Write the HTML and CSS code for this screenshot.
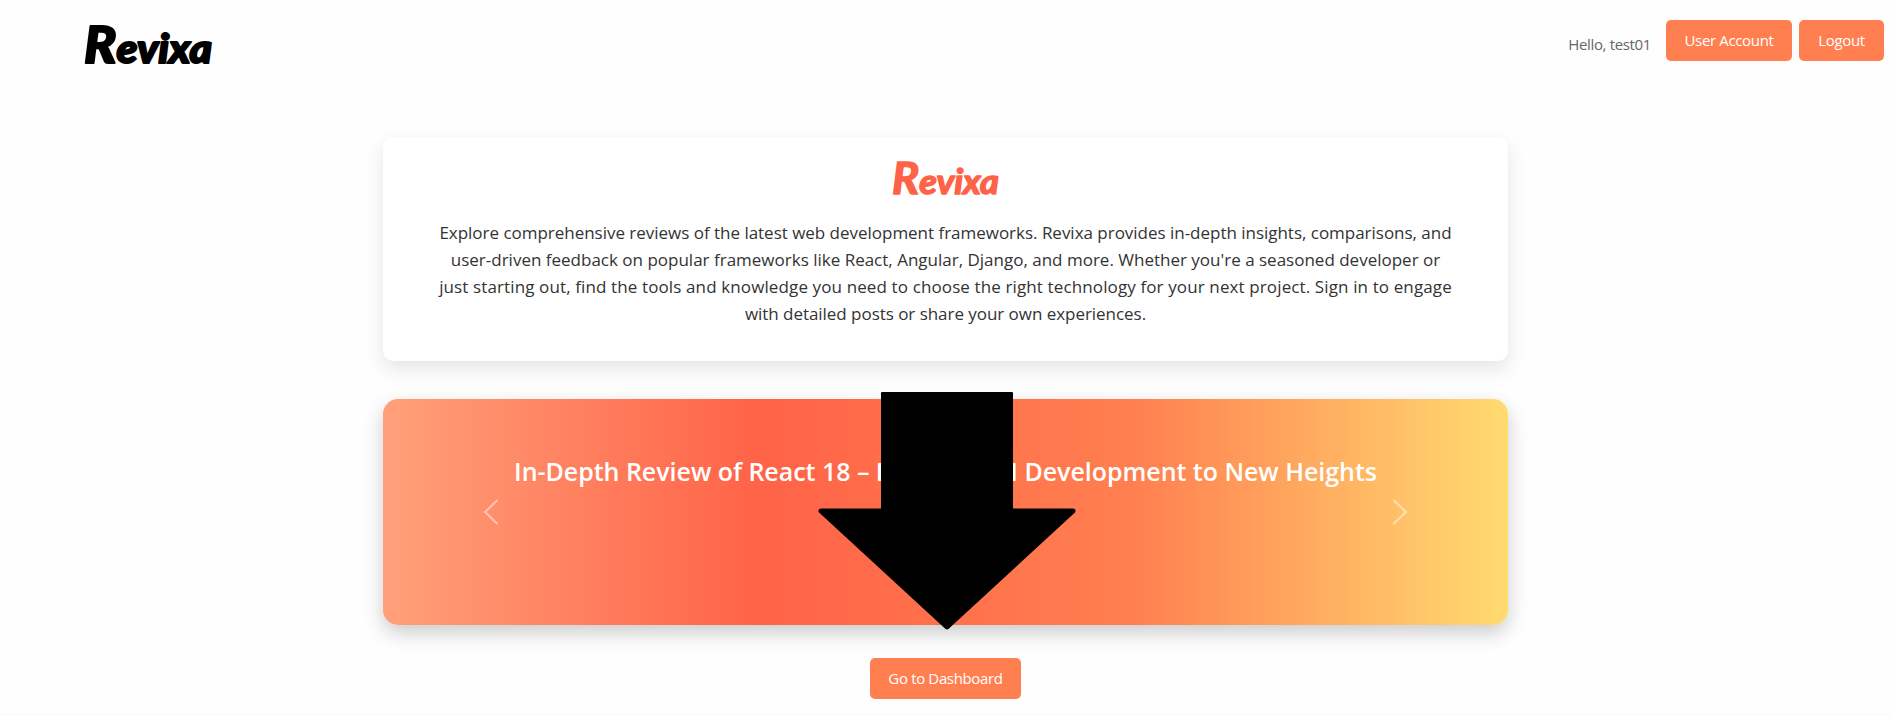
FILE: index.html
```html
<!DOCTYPE html>
<html lang="en">
<head>
<meta charset="utf-8">
<title>Revixa</title>
<link rel="stylesheet" href="styles.css">
</head>
<body>
<header class="navbar">
  <a class="brand"><svg class="brand-mark" viewBox="0 0 140 64" role="img"><text class="script-text" x="4" y="43" textLength="128" lengthAdjust="spacingAndGlyphs">R<tspan class="script-tail">evixa</tspan></text></svg></a>
  <nav class="actions">
    <span class="greeting">Hello, test01</span>
    <a class="btn btn-account">User Account</a>
    <a class="btn btn-logout">Logout</a>
  </nav>
</header>
<main class="content">
  <section class="intro">
    <svg class="intro-mark" viewBox="0 0 116 56" role="img"><text class="script-text script-small" x="4" y="37" textLength="107" lengthAdjust="spacingAndGlyphs">R<tspan class="script-tail">evixa</tspan></text></svg>
    <p class="intro-text">
      <span class="line l1">Explore comprehensive reviews of the latest web development frameworks. Revixa provides in-depth insights, comparisons, and</span>
      <span class="line l2">user-driven feedback on popular frameworks like React, Angular, Django, and more. Whether you're a seasoned developer or</span>
      <span class="line l3">just starting out, find the tools and knowledge you need to choose the right technology for your next project. Sign in to engage</span>
      <span class="line l4">with detailed posts or share your own experiences.</span>
    </p>
  </section>
  <section class="carousel">
    <svg class="chevron" viewBox="0 0 16 26"><path d="M14 1.5 2 13l12 11.500"/></svg>
    <h2 class="slide-title">In-Depth Review of React 18 – Elevating UI Development to New Heights</h2>
    <svg class="chevron" viewBox="0 0 16 26"><path d="M2 1.500 14 13 2 24.500"/></svg>
    <svg class="arrow" viewBox="0 0 260 240"><path d="M65 1H195V118H256L130 236 4 118H65Z"/><path class="arrow-head" d="M4 119H256L130 235Z"/></svg>
  </section>
  <a class="btn btn-dashboard">Go to Dashboard</a>
</main>
</body>
</html>
```

FILE: styles.css
```css
* { box-sizing: border-box; }
body {
  margin: 0;
  height: 716px;
  overflow: hidden;
  border-bottom: 3px solid #fcfcfc;
  background: #fefefe;
  font-family: "Open Sans", "Noto Sans", sans-serif;
  color: #333;
}
.navbar {
  display: flex;
  justify-content: space-between;
  align-items: flex-start;
  height: 137px;
  padding: 20px 8px 0 80px;
}
.brand-mark { display: block; width: 140px; height: 64px; }
.script-text {
  font: italic 900 51px Lato, sans-serif;
  fill: #000;
  stroke: #000;
  stroke-width: 2px;
  stroke-linejoin: round;
}
.script-tail { font-size: 0.8em; }
.script-small {
  font-size: 43px;
  font-weight: 700;
  fill: #ff6347;
  stroke: #ff6347;
  stroke-width: 1.5px;
}
.actions { display: flex; align-items: flex-start; }
.greeting {
  margin: 13px 15px 0 0;
  font-size: 15px;
  line-height: 22px;
  letter-spacing: -0.35px;
  color: #666;
  white-space: nowrap;
}
.btn {
  display: flex;
  align-items: center;
  justify-content: center;
  height: 41px;
  padding-bottom: 2px;
  border-radius: 5px;
  background: #ff7f50;
  color: #fff;
  font-size: 15px;
  letter-spacing: -0.35px;
  white-space: nowrap;
}
.btn-account { width: 126px; margin-right: 7px; }
.btn-logout { width: 85px; }
.btn-dashboard { width: 151px; margin-top: 33px; }
.content {
  display: flex;
  flex-direction: column;
  align-items: center;
  width: 1125px;
  margin-left: 383px;
}
.intro {
  display: flex;
  flex-direction: column;
  align-items: center;
  width: 100%;
  height: 224px;
  padding-top: 20px;
  border-radius: 10px;
  background: #fff;
  box-shadow: 0 8px 20px rgba(0, 0, 0, 0.1);
}
.intro-mark { width: 116px; height: 56px; }
.intro-text {
  display: flex;
  flex-direction: column;
  align-items: center;
  margin: 6px 0 0;
  font-size: 17px;
  line-height: 27px;
}
.line { white-space: nowrap; }
.l1 { letter-spacing: -0.02px; }
.l3 { letter-spacing: 0.12px; }
.l4 { letter-spacing: -0.04px; }
.carousel {
  position: relative;
  display: flex;
  align-items: center;
  justify-content: space-between;
  width: 100%;
  height: 226px;
  margin-top: 38px;
  padding: 0 100px;
  border-radius: 15px;
  background: linear-gradient(90deg, #ffa07a, #ff6347 33.3%, #ff7f50 66.6%, #ffdb70);
  box-shadow: 0 8px 20px rgba(0, 0, 0, 0.2);
}
.chevron { width: 16px; height: 26px; opacity: 0.5; }
.chevron path { fill: none; stroke: #fff; stroke-width: 2; stroke-linecap: round; stroke-linejoin: round; }
.slide-title {
  margin: 0;
  padding-bottom: 82px;
  font-size: 25px;
  line-height: 34px;
  font-weight: 650;
  letter-spacing: -0.03px;
  color: #fff;
  white-space: nowrap;
}
.arrow { position: absolute; left: 434px; top: -7px; width: 260px; height: 240px; }
.arrow path { fill: #000; stroke: #000; stroke-width: 2; stroke-linejoin: round; }
.arrow .arrow-head { stroke-width: 5; }
```
